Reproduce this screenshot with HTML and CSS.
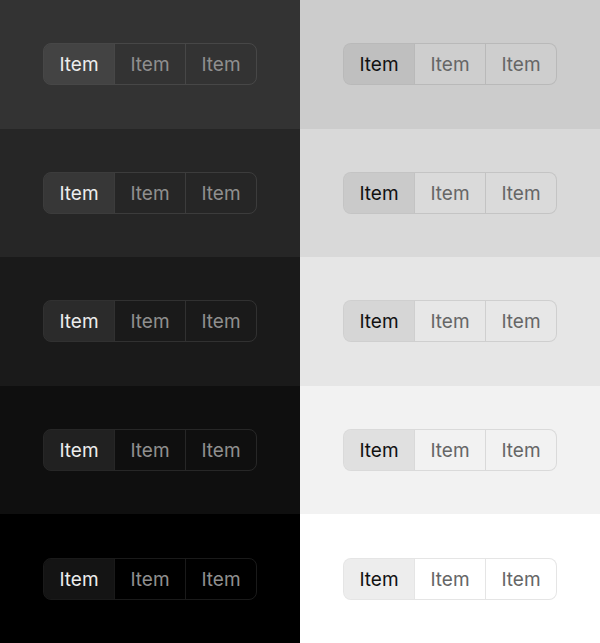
FILE: index.html
```html
<!DOCTYPE html>
<html>
<head>
<meta charset="utf-8">
<link rel="stylesheet" href="styles.css">
</head>
<body>
<div class="grid">
  <div class="cell dark d1"><div class="seg"><button class="on">Item</button><button>Item</button><button>Item</button></div></div>
  <div class="cell light l1"><div class="seg"><button class="on">Item</button><button>Item</button><button>Item</button></div></div>
  <div class="cell dark d2"><div class="seg"><button class="on">Item</button><button>Item</button><button>Item</button></div></div>
  <div class="cell light l2"><div class="seg"><button class="on">Item</button><button>Item</button><button>Item</button></div></div>
  <div class="cell dark d3"><div class="seg"><button class="on">Item</button><button>Item</button><button>Item</button></div></div>
  <div class="cell light l3"><div class="seg"><button class="on">Item</button><button>Item</button><button>Item</button></div></div>
  <div class="cell dark d4"><div class="seg"><button class="on">Item</button><button>Item</button><button>Item</button></div></div>
  <div class="cell light l4"><div class="seg"><button class="on">Item</button><button>Item</button><button>Item</button></div></div>
  <div class="cell dark d5"><div class="seg"><button class="on">Item</button><button>Item</button><button>Item</button></div></div>
  <div class="cell light l5"><div class="seg"><button class="on">Item</button><button>Item</button><button>Item</button></div></div>
</div>
</body>
</html>
```

FILE: styles.css
```css
html, body {
  margin: 0;
  padding: 0;
  width: 600px;
  height: 643px;
  overflow: hidden;
}
.grid {
  display: grid;
  grid-template-columns: 300px 300px;
  grid-template-rows: repeat(5, 1fr);
  height: 643px;
}
.cell {
  display: flex;
  align-items: center;
  justify-content: center;
}
.d1 { background: #333333; }
.d2 { background: #262626; }
.d3 { background: #1a1a1a; }
.d4 { background: #0f0f0f; }
.d5 { background: #000000; }
.l1 { background: #cccccc; }
.l2 { background: #d9d9d9; }
.l3 { background: #e6e6e6; }
.l4 { background: #f2f2f2; }
.l5 { background: #ffffff; }

.seg {
  display: flex;
  border-radius: 8px;
  overflow: hidden;
  width: 214px;
  height: 42px;
  box-sizing: border-box;
}
.seg button {
  flex: 1;
  margin: 0;
  padding: 1px 0 0 0;
  background: transparent;
  border: none;
  font-family: Inter, "Noto Sans", sans-serif;
  font-size: 19px;
  line-height: 39px;
}
.seg button + button { border-left: 1px solid; }

.dark .seg { border: 1px solid rgba(255,255,255,0.1); }
.dark .seg button { color: #8f8f8f; border-color: rgba(255,255,255,0.1); }
.dark .seg button.on { color: #ededed; background: rgba(255,255,255,0.08); }

.light .seg { border: 1px solid rgba(0,0,0,0.1); background: rgba(255,255,255,0.05); }
.light .seg button { color: #666666; border-color: rgba(0,0,0,0.1); }
.light .seg button.on { color: #111111; background: rgba(0,0,0,0.07); }
```
